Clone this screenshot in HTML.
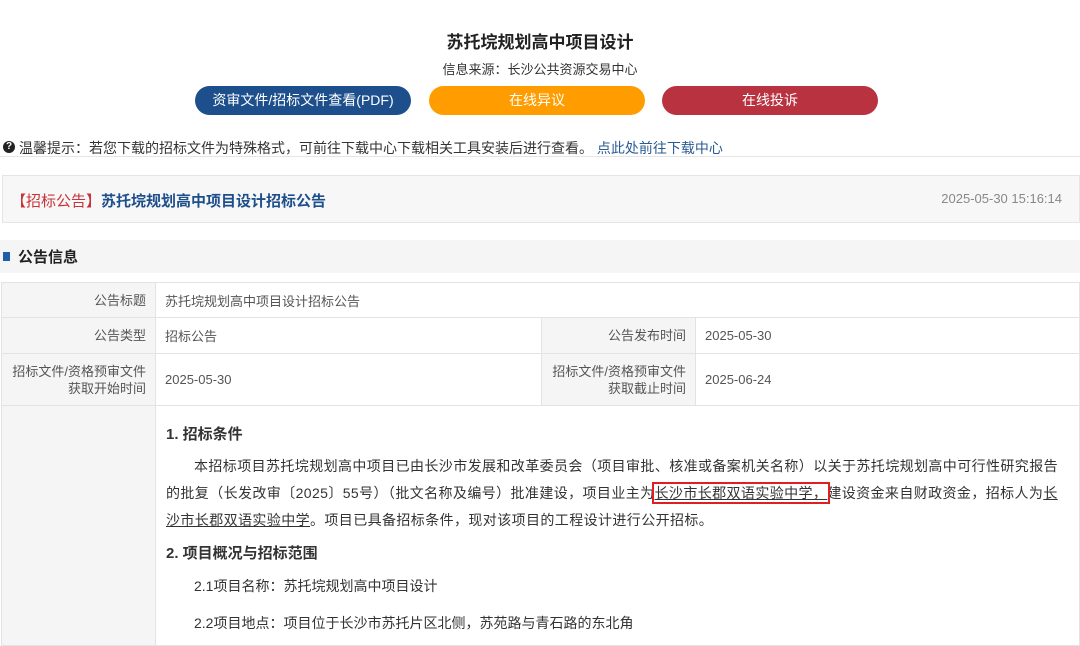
<!DOCTYPE html>
<html><head><meta charset="utf-8"><style>
*{margin:0;padding:0;box-sizing:border-box}
body{width:1080px;height:637px;overflow:hidden;background:#fff;font-family:"Liberation Sans","Noto Sans CJK SC",sans-serif;color:#333;position:relative}
.a{position:absolute}
.btn{position:absolute;top:86px;height:29px;border-radius:15px;color:#fff;font-size:14px;text-align:center;line-height:29px}
table{position:absolute;left:1px;top:282px;width:1079px;border-collapse:collapse;font-size:13px}
td{border:1px solid #e3e3e3;color:#555}
td.l{background:#f5f5f5;text-align:right;padding-right:9px;line-height:17px}
td.v{padding-left:9px}
.c{font-size:14px;color:#333;padding:0 0 0 10px;vertical-align:top}
.c p{line-height:27px}
u{text-decoration:underline}
</style></head><body>
<div class="a" style="top:28px;left:0;width:1080px;text-align:center;font-size:17px;font-weight:bold;color:#222">苏托垸规划高中项目设计</div>
<div class="a" style="top:59px;left:0;width:1080px;text-align:center;font-size:13px;color:#333">信息来源：长沙公共资源交易中心</div>
<div class="btn" style="left:195px;width:216px;background:#1d4f8c">资审文件/招标文件查看(PDF)</div>
<div class="btn" style="left:429px;width:216px;background:#ff9c00">在线异议</div>
<div class="btn" style="left:662px;width:216px;background:#b93240">在线投诉</div>
<div class="a" style="top:141px;left:3px;width:12px;height:12px;border-radius:6px;background:#222;color:#fff;font-size:10px;line-height:12px;text-align:center;font-weight:bold">?</div>
<div class="a" style="top:138px;left:19px;font-size:14px;color:#333">温馨提示：若您下载的招标文件为特殊格式，可前往下载中心下载相关工具安装后进行查看。 <span style="color:#2b5c93">点此处前往下载中心</span></div>
<div class="a" style="top:156px;left:0;width:1080px;height:1px;background:#e5e5e5"></div>
<div class="a" style="top:175px;left:2px;width:1078px;height:48px;background:#f7f7f7;border:1px solid #e5e5e5"></div>
<div class="a" style="top:190px;left:11px;font-size:15px"><span style="color:#c8333a">【招标公告】</span><span style="color:#1d4f8c;font-weight:bold">苏托垸规划高中项目设计招标公告</span></div>
<div class="a" style="top:191px;right:18px;font-size:13px;color:#888">2025-05-30 15:16:14</div>
<div class="a" style="top:240px;left:0;width:1080px;height:33px;background:#f5f5f5"></div>
<div class="a" style="top:252px;left:3px;width:7px;height:9px;background:#1d5fa8"></div>
<div class="a" style="top:246px;left:18px;font-size:15px;font-weight:bold;color:#222">公告信息</div>
<table>
<tr style="height:35px"><td class="l" style="width:154px">公告标题</td><td class="v" colspan="3">苏托垸规划高中项目设计招标公告</td></tr>
<tr style="height:36px"><td class="l">公告类型</td><td class="v" style="width:386px">招标公告</td><td class="l" style="width:154px">公告发布时间</td><td class="v">2025-05-30</td></tr>
<tr style="height:52px"><td class="l">招标文件/资格预审文件<br>获取开始时间</td><td class="v">2025-05-30</td><td class="l">招标文件/资格预审文件<br>获取截止时间</td><td class="v">2025-06-24</td></tr>
<tr style="height:240px"><td class="l"></td><td class="c" colspan="3">
<p style="font-weight:bold;font-size:15px;margin-top:16px;line-height:26px">1. 招标条件</p>
<p style="margin-top:5px;text-indent:28px;padding-right:14px;letter-spacing:0.4px">本招标项目苏托垸规划高中项目已由长沙市发展和改革委员会（项目审批、核准或备案机关名称）以关于苏托垸规划高中可行性研究报告的批复（长发改审〔2025〕55号）（批文名称及编号）批准建设，项目业主为<u style="outline:2px solid #e02020;outline-offset:1px">长沙市长郡双语实验中学，</u>建设资金来自财政资金，招标人为<u>长沙市长郡双语实验中学</u>。项目已具备招标条件，现对该项目的工程设计进行公开招标。</p>
<p style="font-weight:bold;font-size:15px;margin-top:6px">2. 项目概况与招标范围</p>
<p style="margin-top:6px;padding-left:28px">2.1项目名称：苏托垸规划高中项目设计</p>
<p style="margin-top:10px;padding-left:28px">2.2项目地点：项目位于长沙市苏托片区北侧，苏苑路与青石路的东北角</p>
</td></tr>
</table>
</body></html>
